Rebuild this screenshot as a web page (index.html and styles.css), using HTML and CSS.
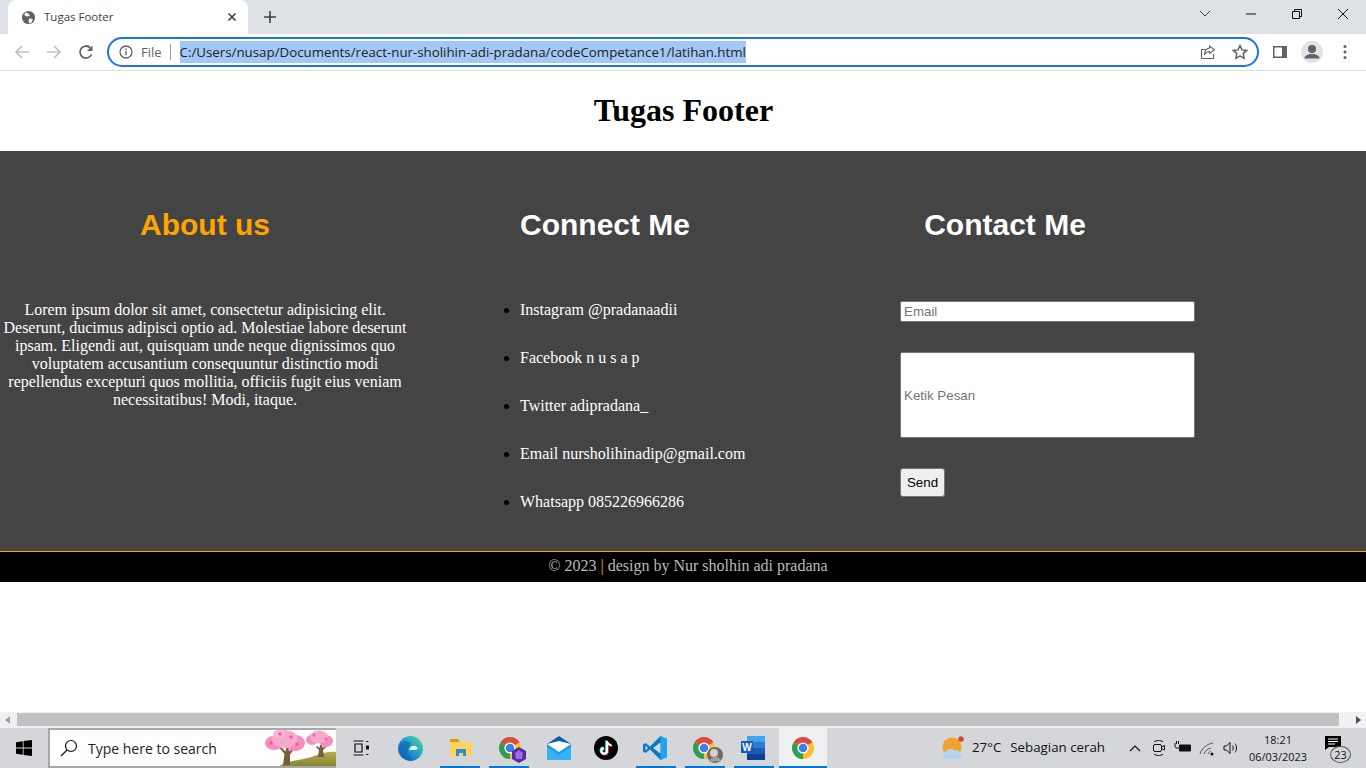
FILE: index.html
```html
<!DOCTYPE html>
<html lang="en">
<head>
  <title>Tugas Footer</title>
  <meta charset="utf-8">
  <link rel="stylesheet" href="styles.css">
</head>
<body>

<svg class="defs" width="0" height="0">
  <defs>
    <linearGradient id="edgeFill" x1="1" y1="0" x2="0" y2="1">
      <stop offset="0" stop-color="#56dd78"/>
      <stop offset=".4" stop-color="#25a9c8"/>
      <stop offset=".75" stop-color="#1476c8"/>
      <stop offset="1" stop-color="#0d55a0"/>
    </linearGradient>
    <linearGradient id="hillFill" x1="0" y1="0" x2="0" y2="1">
      <stop offset="0" stop-color="#b9ac57"/>
      <stop offset="1" stop-color="#83802a"/>
    </linearGradient>
  </defs>
  <symbol id="chrome" viewBox="0 0 24 24">
    <path fill="#e04a3a" d="M12 12L2.470 6.500A11 11 0 0 1 21.530 6.500Z"/>
    <path fill="#fbc02d" d="M12 12L21.530 6.500A11 11 0 0 1 12 23Z"/>
    <path fill="#2e9e4f" d="M12 12L12 23A11 11 0 0 1 2.470 6.500Z"/>
    <circle cx="12" cy="12" r="5.600" fill="#fff"/>
    <circle cx="12" cy="12" r="4.300" fill="#3f7fe8"/>
  </symbol>
</svg>

<div class="chrome-top">
  <div class="tabstrip">
    <div class="tab">
      <svg class="favicon" viewBox="0 0 16 16"><circle cx="8" cy="8" r="7" fill="#5f6368"/><path fill="#fff" d="M5 2.500l3 1.500 1.500 2-2 1-2.500-.5-1.500-1.500zM9 9l3.500.5L11.500 13 9 14.500 8 11.500z"/></svg>
      <span class="tab-title">Tugas Footer</span>
      <svg class="tab-close" viewBox="0 0 10 10"><path d="M1.500 1.500l7 7M8.500 1.500l-7 7" stroke="#3c4043" stroke-width="1.600"/></svg>
    </div>
    <svg class="new-tab" viewBox="0 0 12 12"><path d="M6 0v12M0 6h12" stroke="#3c4043" stroke-width="1.600"/></svg>
    <div class="win-controls">
      <svg class="win-chevron" viewBox="0 0 12 8"><path d="M1 1l5 5 5-5" fill="none" stroke="#3c4043"/></svg>
      <svg class="win-btn" viewBox="0 0 12 12"><path d="M1 6h10" stroke="#111" stroke-width="1"/></svg>
      <svg class="win-btn" viewBox="0 0 12 12"><path d="M1.500 3.500h7v7h-7zM3.500 3.500v-2h7v7h-2" fill="none" stroke="#111"/></svg>
      <svg class="win-btn" viewBox="0 0 12 12"><path d="M1 1l10 10M11 1L1 11" stroke="#111"/></svg>
    </div>
  </div>

  <div class="toolbar">
    <svg class="nav-icon" viewBox="0 0 16 16"><path d="M15 8H2M8 2L2 8l6 6" fill="none" stroke="#bdc1c6" stroke-width="1.700"/></svg>
    <svg class="nav-icon" viewBox="0 0 16 16"><path d="M1 8h13M8 2l6 6-6 6" fill="none" stroke="#bdc1c6" stroke-width="1.700"/></svg>
    <svg class="nav-icon" viewBox="0 0 16 16"><path d="M13.500 10.500A6 6 0 1 1 12.300 3.800" fill="none" stroke="#5f6368" stroke-width="1.800"/><path d="M14.500 1.500v5.500H9z" fill="#5f6368"/></svg>
    <div class="omnibox">
      <svg class="info-icon" viewBox="0 0 14 14"><circle cx="7" cy="7" r="6" fill="none" stroke="#5f6368" stroke-width="1.300"/><path d="M7 6v4.200M7 3.600v1.300" stroke="#5f6368" stroke-width="1.400"/></svg>
      <span class="scheme">File</span>
      <span class="scheme-sep"></span>
      <span class="url">C:/Users/nusap/Documents/react-nur-sholihin-adi-pradana/codeCompetance1/latihan.html</span>
      <svg class="omni-share" viewBox="0 0 16 16"><path d="M13.500 10v4.500h-12v-9h4" fill="none" stroke="#5f6368" stroke-width="1.100"/><path d="M9.500 2l5 3.800-5 3.700V7.500C7 7.500 5.500 8.500 4.500 11c0-4 2-6.500 5-7z" fill="none" stroke="#5f6368" stroke-width="1.100"/></svg>
      <svg class="omni-star" viewBox="0 0 16 16"><path d="M8 1.500l2 4.400 4.700.5-3.500 3.200 1 4.700L8 11.900l-4.200 2.400 1-4.700L1.300 6.400 6 5.900z" fill="none" stroke="#5f6368" stroke-width="1.500"/></svg>
    </div>
    <svg class="side-panel" viewBox="0 0 14 12"><rect width="14" height="12" fill="#5f6368"/><rect x="1.500" y="1.500" width="7.500" height="9" fill="#fff"/></svg>
    <div class="avatar"><svg viewBox="0 0 22 22"><circle cx="11" cy="8" r="4" fill="#5f6368"/><path d="M3.500 17.500c0-3 3.500-4.500 7.500-4.500s7.500 1.500 7.500 4.500z" fill="#5f6368"/></svg></div>
    <svg class="menu-dots" viewBox="0 0 4 16"><circle cx="2" cy="2.500" r="1.500" fill="#5f6368"/><circle cx="2" cy="8" r="1.500" fill="#5f6368"/><circle cx="2" cy="13.500" r="1.500" fill="#5f6368"/></svg>
  </div>
</div>

<main class="viewport">
  <h1 class="page-title">Tugas Footer</h1>
  <footer class="site-footer">
    <section class="col col-about">
      <h2 class="col-title orange">About us</h2>
      <p class="about-text">Lorem ipsum dolor sit amet, consectetur adipisicing elit. Deserunt, ducimus adipisci optio ad. Molestiae labore deserunt ipsam. Eligendi aut, quisquam unde neque dignissimos quo voluptatem accusantium consequuntur distinctio modi repellendus excepturi quos mollitia, officiis fugit eius veniam necessitatibus! Modi, itaque.</p>
    </section>
    <section class="col col-connect">
      <h2 class="col-title">Connect Me</h2>
      <ul class="connect-list">
        <li>Instagram @pradanaadii</li>
        <li>Facebook n u s a p</li>
        <li>Twitter adipradana_</li>
        <li>Email nursholihinadip@gmail.com</li>
        <li>Whatsapp 085226966286</li>
      </ul>
    </section>
    <section class="col col-contact">
      <h2 class="col-title">Contact Me</h2>
      <form class="contact-form">
        <input class="field-email" type="text" placeholder="Email">
        <input class="field-msg" type="text" placeholder="Ketik Pesan">
        <button class="send-btn" type="button">Send</button>
      </form>
    </section>
  </footer>
  <div class="copyright">© 2023 <span class="orange">|</span> design by Nur sholhin adi pradana</div>
</main>

<div class="hscroll">
  <span class="arrow-left"></span>
  <div class="hscroll-thumb"></div>
  <span class="arrow-right"></span>
</div>

<div class="taskbar">
  <div class="start">
    <svg viewBox="0 0 16 16" width="16" height="16"><path fill="#000" d="M0 2.200l6.800-1v6.400H0zM7.600 1.100L16 0v7.600H7.600zM0 8.400h6.800v6.400l-6.800-1zM7.600 8.400H16V16l-8.400-1.100z"/></svg>
  </div>
  <div class="searchbox">
    <svg class="search-glass" viewBox="0 0 18 18"><circle cx="11" cy="7" r="5.500" fill="none" stroke="#111" stroke-width="1.200"/><path d="M7 11l-6 6" stroke="#111" stroke-width="1.300"/></svg>
    <span class="search-text">Type here to search</span>
    <svg class="search-art" viewBox="0 0 72 38">
      <path d="M14 38C24 31 40 31 50 27 58 24 65 22 72 23V38z" fill="url(#hillFill)"/>
      <path d="M19 36l1.500-11-5-6 1.500-1 4.500 4.500 1-5h2l.5 5 5-4.500 1 1-5 6.500L26 36zM54 28l1-7-3-3 1-1 2.500 2 .5-3h2l.5 3 2.500-2 1 1-3 3 1 7z" fill="#7d5a3c"/>
      <ellipse cx="10" cy="14" rx="9" ry="7" fill="#f68dbb"/>
      <ellipse cx="31" cy="14" rx="10" ry="8" fill="#f68dbb"/>
      <ellipse cx="21" cy="10" rx="13" ry="9" fill="#f9a8cd"/>
      <ellipse cx="15" cy="5" rx="6" ry="4" fill="#fbb6d6"/>
      <ellipse cx="48" cy="11" rx="6" ry="5" fill="#f68dbb"/>
      <ellipse cx="62" cy="12" rx="7" ry="6" fill="#f68dbb"/>
      <ellipse cx="55" cy="8" rx="9" ry="6.500" fill="#f9a8cd"/>
      <circle cx="7" cy="14" r="1.800" fill="#e8609c"/><circle cx="27" cy="8" r="1.800" fill="#e8609c"/><circle cx="33" cy="15" r="1.800" fill="#e8609c"/><circle cx="16" cy="5" r="1.800" fill="#e8609c"/>
      <circle cx="50" cy="6" r="1.500" fill="#e8609c"/><circle cx="62" cy="10" r="1.500" fill="#e8609c"/>
    </svg>
  </div>
  <div class="task-slot slot-view">
    <svg viewBox="0 0 16 16" width="16" height="16"><path d="M.5 1h10M.5 15h10M2 4h7v8H2zM13 1.500h2.500M13 14.500h2.500" fill="none" stroke="#111" stroke-width="1.200"/><rect x="13" y="5.500" width="3" height="4" fill="#111"/></svg>
  </div>
  <div class="task-slot slot-edge">
    <svg viewBox="0 0 24 24" width="25" height="25">
      <circle cx="12" cy="12" r="12" fill="url(#edgeFill)"/>
      <path d="M1 11C2 6 6 4 10 5c3 .8 3 3 1 5-3 3-2 8 3 12-7 3-13-3-13-11z" fill="#0f60ae" opacity=".55"/>
      <path d="M10.500 14c.5-3 3-5 5.500-4.500 1.800.3 3 1.500 3 3-1.500.8-3.200 1-5 .8-1.500-.2-2.500.2-3.500.7z" fill="#eef2f4"/>
    </svg>
  </div>
  <div class="task-slot is-open">
    <svg viewBox="0 0 24 20" width="24" height="20"><path d="M1 1h8l2 3H1z" fill="#d99c13"/><rect x="1" y="4" width="22" height="14" fill="#ffd35c"/><path d="M7 18v-7h10v7h-3v-3h-4v3z" fill="#2a8fd0"/></svg>
  </div>
  <div class="task-slot is-open">
    <svg class="task-icon" width="24" height="24"><use href="#chrome"/></svg>
    <svg class="badge-icon" viewBox="0 0 16 16" width="16" height="16"><path d="M8 0l7 4v8l-7 4-7-4V4z" fill="#5b2aa0"/><path d="M8 3l4 3-1 6H5L4 6z" fill="#9a6fe0"/></svg>
  </div>
  <div class="task-slot">
    <svg viewBox="0 0 24 24" width="24" height="24"><path d="M12 0l12 8v3H0V8z" fill="#0f5fa8"/><rect y="8" width="24" height="16" fill="#1e9be8"/><path d="M0 8l12 8 12-8-12-3z" fill="#fff"/><path d="M0 24V11l12 8 12-8v13z" fill="#35b4f2"/></svg>
  </div>
  <div class="task-slot nudge">
    <svg viewBox="0 0 24 24" width="24" height="24"><circle cx="12" cy="12" r="12" fill="#000"/><path d="M13 5v10a2.800 2.800 0 1 1-3-2.800M13 5c.3 2.500 1.800 4 4.500 4.300" fill="none" stroke="#25f4ee" stroke-width="2" transform="translate(-.8 -.6)"/><path d="M13 5v10a2.800 2.800 0 1 1-3-2.800M13 5c.3 2.500 1.800 4 4.500 4.300" fill="none" stroke="#fe2c55" stroke-width="2" transform="translate(.8 .6)"/><path d="M13 5v10a2.800 2.800 0 1 1-3-2.800M13 5c.3 2.500 1.800 4 4.500 4.300" fill="none" stroke="#fff" stroke-width="2"/></svg>
  </div>
  <div class="task-slot is-open nudge">
    <svg viewBox="0 0 24 24" width="24" height="24"><path d="M17.500 0L24 3v18l-6.500 3L7 13.500 2.500 17 0 15.500V8.500L2.500 7 7 10.500z" fill="#0a78c8"/><path d="M17.500 0L24 3v18l-6.500 3z" fill="#1fa5ee"/><path d="M17.500 6.500v11L10 12z" fill="#d5d8dc"/><path d="M2.500 9.500v5L5 12z" fill="#d5d8dc"/></svg>
  </div>
  <div class="task-slot is-open nudge">
    <svg class="task-icon" width="24" height="24"><use href="#chrome"/></svg>
    <svg class="badge-icon" viewBox="0 0 16 16" width="16" height="16"><circle cx="8" cy="8" r="8" fill="#6f6a66"/><circle cx="7" cy="6" r="4" fill="#d8d0c8"/><path d="M2 15c1-4 4-5 7-5s4 2 5 4z" fill="#a59c94"/></svg>
  </div>
  <div class="task-slot is-open nudge">
    <svg viewBox="0 0 24 24" width="24" height="24"><rect x="6" width="18" height="6" fill="#41a5ee"/><rect x="6" y="6" width="18" height="6" fill="#2b7cd3"/><rect x="6" y="12" width="18" height="6" fill="#185abd"/><rect x="6" y="18" width="18" height="6" fill="#103f91"/><rect y="5" width="12" height="12" fill="#185abd"/><text x="6" y="15" class="word-w">W</text></svg>
  </div>
  <div class="task-slot is-open is-active">
    <svg class="task-icon" width="24" height="24"><use href="#chrome"/></svg>
  </div>

  <div class="tray">
    <svg class="weather" viewBox="0 0 24 24" width="24" height="24"><circle cx="11" cy="11" r="9.500" fill="#f2a22c"/><circle cx="20" cy="3" r="2.700" fill="#d9442c"/><path d="M5 23a3.500 3.500 0 0 1-.5-7c1-3 6-4.500 9-1.500 3-1 6 .5 6.500 3.500 2.500 1 2 5-.5 5z" fill="#b5d5ee"/></svg>
    <span class="weather-text"><span>27°C</span><span>Sebagian cerah</span></span>
    <svg class="tray-caret" viewBox="0 0 12 8" width="12" height="8"><path d="M1 7l5-5 5 5" fill="none" stroke="#111" stroke-width="1.200"/></svg>
    <svg class="tray-icon" viewBox="0 0 16 18"><path d="M3 3c2-2 7-2 9 0M3 15c2 2 7 2 9 0" fill="none" stroke="#111"/><rect x="2.500" y="5.500" width="8" height="7" rx="1.500" fill="none" stroke="#111"/><path d="M10.500 8l3-1.500v4.500l-3-1.500" fill="none" stroke="#111"/></svg>
    <svg class="tray-icon" viewBox="0 0 18 18"><path d="M1 4v3a2 2 0 0 0 2 2h2M2.500 2v3M4.500 2v3" fill="none" stroke="#111"/><rect x="5" y="5.500" width="12" height="7" rx="1" fill="#111"/></svg>
    <svg class="tray-icon" viewBox="0 0 18 18"><path d="M2 15C4 9 9 5 15 4M6 15c1-3 4-5.500 7-6M10 15c.5-1.500 2-2.500 3-3" fill="none" stroke="#555" stroke-width="1"/><circle cx="14" cy="15" r="1.500" fill="#111"/></svg>
    <svg class="tray-icon" viewBox="0 0 18 18"><path d="M2 7h2.500L8 3.500v11L4.500 11H2zM10.500 6.500c1 1.500 1 3.500 0 5M13 4.500c2 2.500 2 6.500 0 9" fill="none" stroke="#111"/></svg>
    <div class="clock"><span>18:21</span><span>06/03/2023</span></div>
    <div class="notif">
      <svg viewBox="0 0 16 14" width="16" height="14"><path d="M0 0h16v11H4l-4 3z" fill="#000"/><path d="M3 3h10M3 5.500h10M3 8h7" stroke="#fff"/></svg>
      <span class="notif-count">23</span>
    </div>
  </div>
</div>

</body>
</html>
```

FILE: styles.css
```css
html, body {
  height: 100%;
}
body {
  margin: 0;
  display: flex;
  flex-direction: column;
  overflow: hidden;
  background: #fff;
  font-family: "Liberation Serif", serif;
}
.defs {
  position: absolute;
}

/* browser chrome */
.chrome-top {
  height: 71px;
  flex: none;
  display: flex;
  flex-direction: column;
  font-family: "Open Sans", sans-serif;
  background: #dee1e6;
}
.tabstrip {
  height: 34px;
  display: flex;
  align-items: center;
  padding-left: 8px;
}
.tab {
  width: 240px;
  height: 34px;
  box-sizing: border-box;
  background: #fff;
  border-radius: 8px 8px 0 0;
  display: flex;
  align-items: center;
  padding: 0 6px 0 13px;
}
.favicon {
  width: 15px;
  height: 15px;
}
.tab-title {
  font-size: 11.500px;
  color: #3c4043;
  margin: -2px 0 0 8px;
  flex: 1;
}
.tab-close {
  width: 10px;
  height: 10px;
  margin-right: 5px;
}
.new-tab {
  width: 12px;
  height: 12px;
  margin-left: 16px;
}
.win-controls {
  margin-left: auto;
  display: flex;
  align-items: center;
  margin-top: -6px;
}
.win-chevron {
  width: 12px;
  height: 8px;
  margin-right: 34px;
}
.win-btn {
  width: 12px;
  height: 12px;
  margin-right: 34px;
}
.win-btn:last-child {
  margin-right: 17px;
}
.toolbar {
  height: 37px;
  box-sizing: border-box;
  background: #fff;
  border-bottom: 1px solid #dadce0;
  display: flex;
  align-items: center;
  padding-left: 14px;
}
.nav-icon {
  width: 16px;
  height: 16px;
  margin-right: 16px;
}
.omnibox {
  width: 1152px;
  height: 30px;
  box-sizing: border-box;
  border: 2px solid #1a73e8;
  border-radius: 15px;
  margin-left: -3px;
  display: flex;
  align-items: center;
  padding-left: 10px;
}
.info-icon {
  width: 14px;
  height: 14px;
}
.scheme {
  font-size: 13px;
  color: #5f6368;
  margin-left: 8px;
}
.scheme-sep {
  width: 1px;
  height: 16px;
  background: #9aa0a6;
  margin: 0 9px 0 8px;
}
.url {
  font-size: 13.300px;
  color: #202124;
  background: #a4c8f6;
  line-height: 22px;
  white-space: nowrap;
}
.omni-share {
  width: 16px;
  height: 16px;
  margin-left: auto;
}
.omni-star {
  width: 16px;
  height: 16px;
  margin: 0 9px 0 16px;
}
.side-panel {
  width: 14px;
  height: 12px;
  margin-left: 14px;
}
.avatar {
  width: 22px;
  height: 22px;
  border-radius: 50%;
  background: #e1e3e7;
  margin-left: 14px;
}
.avatar svg {
  display: block;
}
.menu-dots {
  width: 4px;
  height: 16px;
  margin-left: 20px;
}

/* page */
.viewport {
  flex: 1;
  min-height: 0;
  overflow: hidden;
}
.page-title {
  margin: 0;
  height: 80px;
  line-height: 78px;
  padding-left: 1px;
  font-size: 32px;
  font-weight: bold;
  text-align: center;
  color: #000;
}
.site-footer {
  height: 400px;
  background: #444;
  color: #fff;
  display: grid;
  grid-template-columns: 410px 390px 410px;
  border-bottom: 1px solid orange;
}
.col-title {
  font-family: "Liberation Sans", sans-serif;
  font-size: 30px;
  font-weight: bold;
  text-align: center;
  margin: 57px 0 0;
  line-height: 33px;
}
.orange {
  color: orange;
}
.about-text {
  margin: 60px 0 0;
  font-size: 16px;
  line-height: 18px;
  text-align: center;
}
.connect-list {
  list-style: disc;
  color: #fff;
  margin: 60px 0 0;
  padding: 0 0 0 110px;
  font-size: 16px;
  line-height: 18px;
}
.connect-list li {
  margin-bottom: 30px;
}
.connect-list li::marker {
  color: #000;
}
.contact-form {
  margin: 60px 0 0 100px;
  display: flex;
  flex-direction: column;
  align-items: flex-start;
}
.field-email, .field-msg {
  width: 295px;
  box-sizing: border-box;
  border: 1px solid #767676;
  border-radius: 2px;
  padding: 1px 3px;
  font-family: "Liberation Sans", sans-serif;
  font-size: 13.333px;
  background: #fff;
}
.field-email {
  height: 21px;
}
.field-msg {
  height: 86px;
  margin-top: 30px;
}
.field-email::placeholder, .field-msg::placeholder {
  color: #757575;
}
.send-btn {
  width: 45px;
  height: 29px;
  margin-top: 30px;
  padding: 0;
  border: 1px solid #767676;
  border-radius: 3px;
  background: #efefef;
  color: #000;
  font-family: "Liberation Sans", sans-serif;
  font-size: 13.333px;
}
.copyright {
  height: 30px;
  line-height: 28px;
  padding-left: 10px;
  background: #000;
  color: #bbb;
  font-size: 16px;
  text-align: center;
}

/* horizontal scrollbar */
.hscroll {
  height: 16px;
  flex: none;
  background: #f1f1f1;
  display: flex;
  align-items: center;
}
.hscroll-thumb {
  flex: 1;
  height: 13px;
  margin: -1px 17px 0 7px;
  background: #c1c1c1;
}
.arrow-left {
  width: 0;
  height: 0;
  margin-left: 5px;
  border: 4px solid transparent;
  border-left: 0;
  border-right: 5px solid #a3a3a3;
}
.arrow-right {
  width: 0;
  height: 0;
  margin-right: 5px;
  border: 4px solid transparent;
  border-right: 0;
  border-left: 5px solid #505050;
}

/* taskbar */
.taskbar {
  height: 40px;
  flex: none;
  background: #d4d6da;
  display: flex;
  align-items: stretch;
  font-family: "Open Sans", sans-serif;
  color: #111;
}
.start {
  width: 48px;
  display: flex;
  align-items: center;
  justify-content: center;
}
.searchbox {
  width: 288px;
  box-sizing: border-box;
  border: 2px solid #a6a8ab;
  border-right: 0;
  background: #fff;
  display: flex;
  align-items: center;
  overflow: hidden;
}
.search-glass {
  width: 18px;
  height: 18px;
  margin-left: 10px;
}
.search-text {
  font-size: 14px;
  margin-left: 10px;
  color: #222;
}
.search-art {
  width: 72px;
  height: 38px;
  margin-left: auto;
}
.task-slot {
  width: 49px;
  flex: none;
  display: flex;
  align-items: center;
  justify-content: center;
  position: relative;
}
.slot-edge {
  width: 51px;
}
.nudge > svg:first-child {
  margin-right: 3px;
}
.is-open::after {
  content: "";
  position: absolute;
  left: 4px;
  right: 5px;
  bottom: 0;
  height: 2px;
  background: #0078d4;
}
.is-active {
  background: #eef0f2;
  width: 48px;
}
.is-active::after {
  left: 0;
  right: 0;
}
.badge-icon {
  position: absolute;
  right: 7px;
  bottom: 5px;
}
.word-w {
  font-family: "Liberation Sans", sans-serif;
  font-size: 10px;
  font-weight: bold;
  fill: #fff;
  text-anchor: middle;
}
.tray {
  margin-left: auto;
  display: flex;
  align-items: center;
  width: 425px;
  font-size: 13px;
}
.weather-text {
  margin: -2px 0 0 7px;
  display: flex;
  gap: 9px;
  width: 150px;
  font-size: 13.300px;
}
.tray-caret {
  margin: 0 6px 0 7px;
}
.tray-icon {
  width: 24px;
  height: 18px;
}
.clock {
  width: 70px;
  display: flex;
  flex-direction: column;
  align-items: center;
  font-size: 10.900px;
  line-height: 17px;
}
.notif {
  margin-left: 12px;
  position: relative;
  width: 24px;
  height: 24px;
}
.notif-count {
  position: absolute;
  right: -2px;
  bottom: -3px;
  width: 19px;
  height: 15px;
  line-height: 15px;
  text-align: center;
  font-size: 11px;
  border: 1px solid #555;
  border-radius: 50%;
  background: #d4d6da;
}
```
